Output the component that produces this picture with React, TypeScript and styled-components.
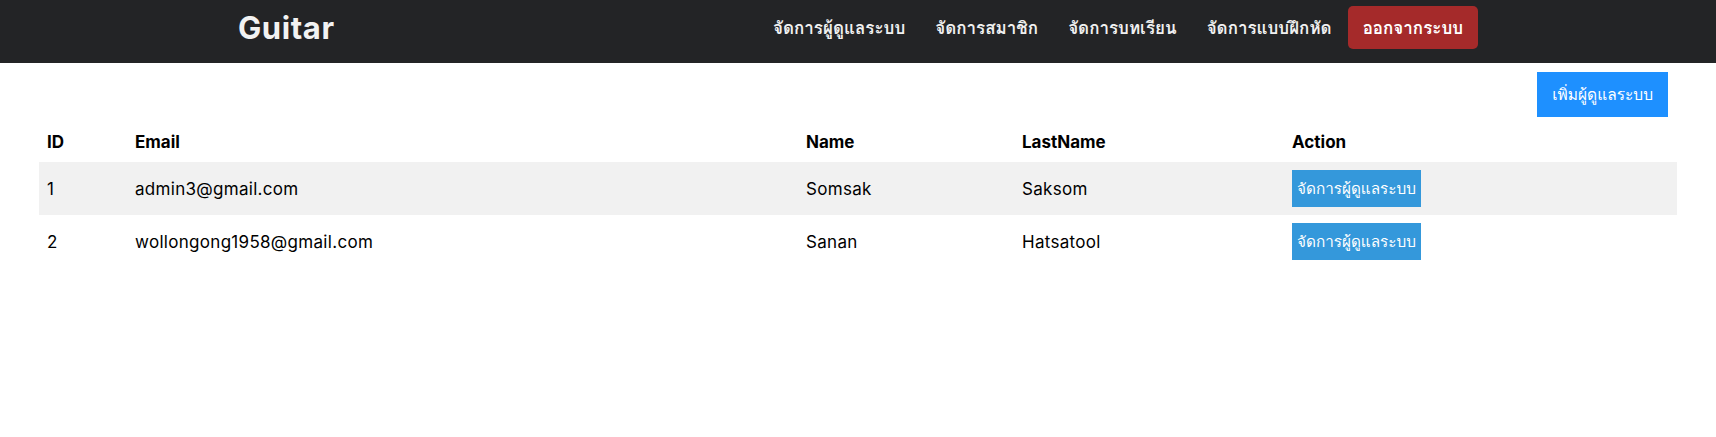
import styled, { createGlobalStyle } from "styled-components";

type Admin = {
  id: number;
  email: string;
  name: string;
  lastName: string;
};

const admins: Admin[] = [
  { id: 1, email: "admin3@gmail.com", name: "Somsak", lastName: "Saksom" },
  { id: 2, email: "wollongong1958@gmail.com", name: "Sanan", lastName: "Hatsatool" },
];

const menu = ["จัดการผู้ดูแลระบบ", "จัดการสมาชิก", "จัดการบทเรียน", "จัดการแบบฝึกหัด"];

const FONT = `Inter, Loma, "Noto Sans Thai Looped", "Noto Sans Thai", "Noto Sans", "DejaVu Sans", sans-serif`;

const GlobalStyle = createGlobalStyle`
  body {
    margin: 0;
    background: #fff;
    font-family: ${FONT};
    color: #000;
  }
`;

const App = () => {
  return (
    <>
      <GlobalStyle />
      <Navbar>
        <NavInner>
          <Logo>Guitar</Logo>
          <NavMenu>
            {menu.map((item) => (
              <NavLink key={item}>{item}</NavLink>
            ))}
            <LogoutButton>ออกจากระบบ</LogoutButton>
          </NavMenu>
        </NavInner>
      </Navbar>

      <Main>
        <Toolbar>
          <AddButton>เพิ่มผู้ดูแลระบบ</AddButton>
        </Toolbar>

        <Table>
          <colgroup>
            <col style={{ width: 88 }} />
            <col style={{ width: 671 }} />
            <col style={{ width: 216 }} />
            <col style={{ width: 270 }} />
            <col />
          </colgroup>
          <thead>
            <tr>
              <Th>ID</Th>
              <Th>Email</Th>
              <Th>Name</Th>
              <Th>LastName</Th>
              <Th>Action</Th>
            </tr>
          </thead>
          <tbody>
            {admins.map((a, i) => (
              <Row key={a.id} $striped={i % 2 === 0}>
                <Td>{a.id}</Td>
                <Td>{a.email}</Td>
                <Td>{a.name}</Td>
                <Td>{a.lastName}</Td>
                <Td>
                  <ManageButton>จัดการผู้ดูแลระบบ</ManageButton>
                </Td>
              </Row>
            ))}
          </tbody>
        </Table>
      </Main>
    </>
  );
};

export default App;

const Navbar = styled.nav`
  height: 63px;
  background: #232426;
  display: flex;
  justify-content: center;
`;

const NavInner = styled.div`
  width: 1240px;
  display: flex;
  align-items: flex-start;
  justify-content: space-between;
  padding-top: 6px;
  box-sizing: border-box;
`;

const Logo = styled.div`
  color: #f2f2f2;
  font-size: 31px;
  font-weight: 700;
  line-height: 43px;
  letter-spacing: 0.6px;
`;

const NavMenu = styled.div`
  display: flex;
  align-items: center;
  height: 43px;
`;

const NavLink = styled.a`
  padding: 0 15px;
  color: #f0f0f0;
  font-size: 17px;
  font-weight: 700;
  cursor: pointer;

  &:last-of-type {
    padding-right: 16px;
  }
`;

const LogoutButton = styled.button`
  height: 43px;
  padding: 0 15px;
  border: none;
  border-radius: 5px;
  background: #a52a2a;
  color: #fff;
  font-family: ${FONT};
  font-size: 17px;
  font-weight: 700;
  cursor: pointer;
`;

const Main = styled.main`
  padding: 9px 39px 0;
`;

const Toolbar = styled.div`
  display: flex;
  justify-content: flex-end;
  padding-right: 9px;
  margin-bottom: 5px;
`;

const AddButton = styled.button`
  height: 45px;
  padding: 0 15px;
  border: none;
  background: #1e90ff;
  color: #fff;
  font-family: ${FONT};
  font-size: 15.5px;
  cursor: pointer;
`;

const Table = styled.table`
  width: 100%;
  border-collapse: collapse;
  table-layout: fixed;
`;

const Th = styled.th`
  padding: 8px;
  text-align: left;
  font-size: 17px;
  font-weight: 700;
  line-height: 24px;
`;

const Row = styled.tr<{ $striped: boolean }>`
  background: ${(p) => (p.$striped ? "#f1f1f1" : "transparent")};
`;

const Td = styled.td`
  padding: 8px;
  height: 37px;
  font-size: 17px;
  line-height: 24px;
  letter-spacing: 0.3px;
  vertical-align: middle;
`;

const ManageButton = styled.button`
  height: 37px;
  padding: 0 5px;
  border: none;
  background: #3498db;
  color: #fff;
  font-family: ${FONT};
  font-size: 15.3px;
  letter-spacing: 0;
  cursor: pointer;
`;
